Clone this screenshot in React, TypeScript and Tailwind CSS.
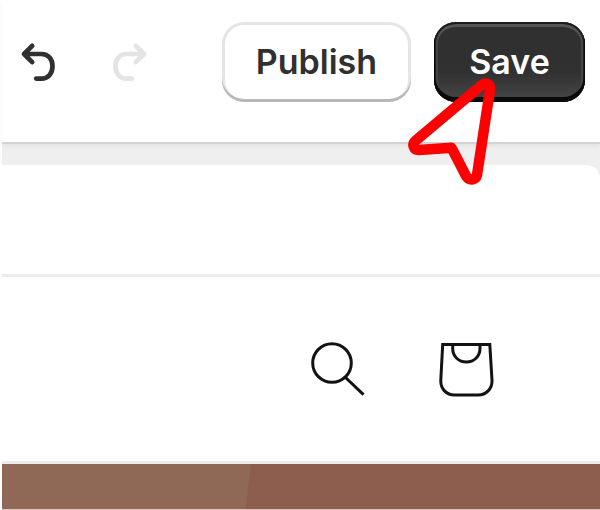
function UndoArrow() {
  return (
    <svg viewBox="0 0 40 44" className="h-11 w-10" fill="none" stroke="currentColor" strokeWidth="4.7" strokeLinecap="round" strokeLinejoin="round" aria-hidden="true">
      <path d="M14.2 5.8 L6 14 L14.2 22.2 M6 14 H23.5 C30.5 14 34.5 19.5 34.5 26.2 C34.5 33 30.5 38.6 23.5 38.6 H18.2" />
    </svg>
  );
}

function RedoArrow() {
  return (
    <svg viewBox="0 0 40 44" className="h-11 w-10" fill="none" stroke="currentColor" strokeWidth="4.7" strokeLinecap="round" strokeLinejoin="round" aria-hidden="true">
      <path d="M26.8 5.8 L35 14 L26.8 22.2 M35 14 H17.5 C10.5 14 6.5 19.5 6.5 26.2 C6.5 33 10.5 38.6 17.5 38.6 H22.8" />
    </svg>
  );
}

function Pointer() {
  return (
    <svg viewBox="0 0 90 110" className="pointer-events-none absolute -left-7 top-[54px] h-[110px] w-[90px]" fill="none" stroke="#ff0000" strokeWidth="10.5" strokeLinejoin="round" aria-hidden="true">
      <path d="M75.5 9.2 L9.5 64.8 C5.5 68.5 7.8 74.2 13 74 L45.5 71.8 L60 99.8 C62.8 105 69.8 104.5 71 99 L84 14 C84.8 8.2 79.8 5.6 75.5 9.2 Z" />
    </svg>
  );
}

function EditorBar() {
  return (
    <header className="relative z-10 flex items-start border-b-2 border-[#d3d3d3] bg-white pt-[22px] pr-[15px] pb-10 pl-4 shadow-[0_2px_4px_rgba(0,0,0,0.05)]">
      <div className="flex h-20 items-center gap-[51px]">
        <button type="button" aria-label="Undo" className="text-[#303030]">
          <UndoArrow />
        </button>
        <button type="button" aria-label="Redo" disabled className="text-[#e4e4e4]">
          <RedoArrow />
        </button>
      </div>
      <div className="ml-auto flex gap-[23px] text-[34px] leading-10 font-[570]">
        <button type="button" className="h-20 w-[189px] rounded-[22px] bg-white text-[#303030] shadow-[inset_0_-3px_0_#b8b8b8,inset_0_0_0_3px_#e5e5e5]">
          Publish
        </button>
        <div className="relative">
          <button type="button" className="h-20 w-[151px] rounded-[22px] bg-linear-to-b from-[#303030] from-60% to-[#474747] text-white shadow-[inset_0_-4px_0_1px_#0a0a0a,inset_0_0_0_2px_#1c1c1c,inset_0_3px_0_2px_#555555,inset_0_0_0_4px_#444444]">
            Save
          </button>
          <Pointer />
        </div>
      </div>
    </header>
  );
}

function SearchIcon() {
  return (
    <svg viewBox="0 0 56 56" className="size-14" fill="none" stroke="#121212" strokeWidth="3" aria-hidden="true">
      <circle cx="21" cy="22" r="19.3" />
      <path d="M34.5 36.5 L52.5 53.7" />
    </svg>
  );
}

function BagIcon() {
  return (
    <svg viewBox="0 0 56 56" className="size-14" fill="none" stroke="#121212" strokeWidth="3" aria-hidden="true">
      <path d="M3.7 3.5 H50.8 L53 39 C53.5 48 47 54 39 54 H15.5 C7.5 54 1.3 48 1.8 39 Z" />
      <path d="M13.7 3.5 V7.5 C13.7 15.5 19.7 21 27.3 21 C35 21 41 15.5 41 7.5 V3.5" />
    </svg>
  );
}

export default function App() {
  return (
    <div className="min-h-screen bg-white pl-0.5 font-['Inter',sans-serif]">
      <EditorBar />
      <main className="bg-[#efefef] pt-[21px]">
        <div className="rounded-tr-[14px] bg-white">
          <div className="h-[109px]" />
          <nav className="flex h-[190px] items-center justify-end gap-[72px] border-y-3 border-[#ececec] pr-[105px]">
            <button type="button" aria-label="Search">
              <SearchIcon />
            </button>
            <button type="button" aria-label="Cart">
              <BagIcon />
            </button>
          </nav>
          <div className="flex h-[45px] bg-[#8d5e4d]">
            <svg viewBox="0 0 250 45" className="h-[45px] w-[250px]" aria-hidden="true">
              <path d="M0 0 H249 C247 15 245 30 244 45 H0 Z" fill="#8f6856" />
            </svg>
          </div>
          <div className="h-px bg-[#d9c6bd]" />
        </div>
      </main>
    </div>
  );
}
